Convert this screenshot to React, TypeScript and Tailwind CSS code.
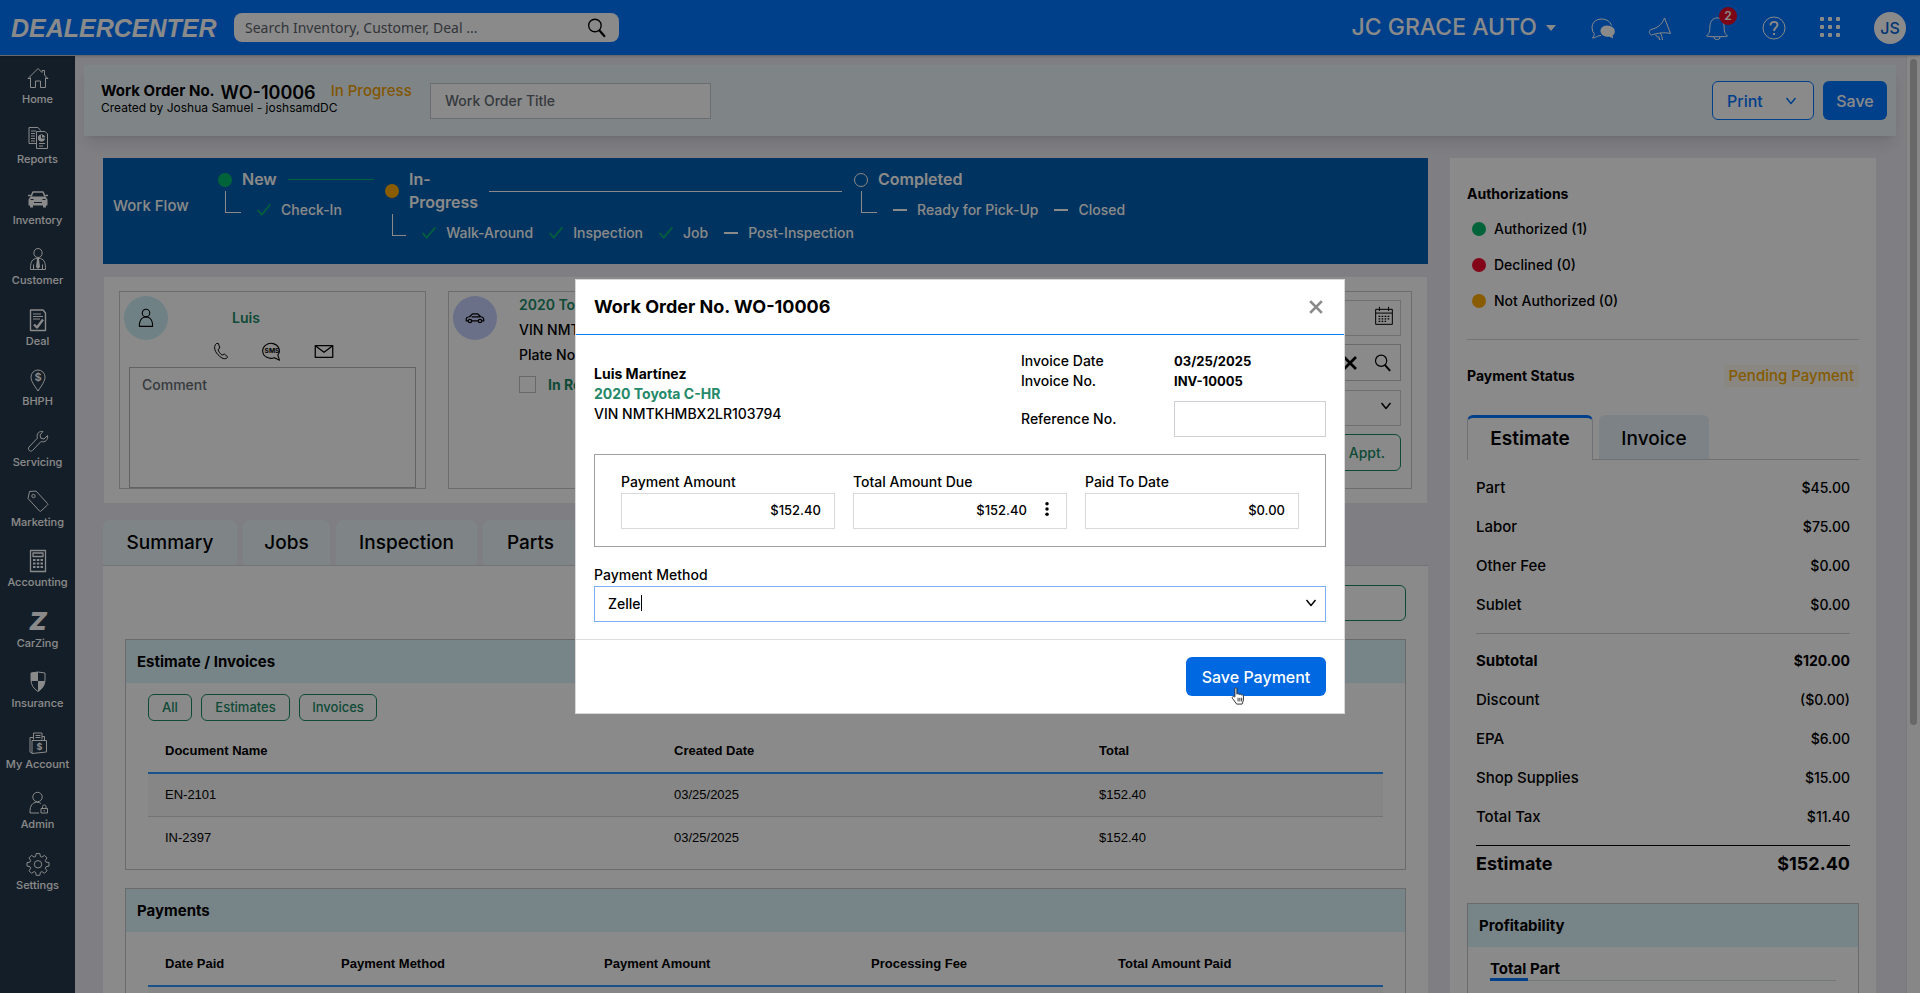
import { ReactNode, SVGProps } from "react";
import clsx from "clsx";

type IconProps = SVGProps<SVGSVGElement>;

function Icon({ children, className = "size-6", ...rest }: IconProps) {
  return (
    <svg
      viewBox="0 0 24 24"
      fill="none"
      stroke="currentColor"
      strokeWidth={1}
      strokeLinejoin="round"
      className={clsx("shrink-0", className)}
      aria-hidden="true"
      {...rest}
    >
      {children}
    </svg>
  );
}

const ChevronIcon = ({ className = "size-3" }: { className?: string }) => (
  <Icon className={className} strokeWidth={2.9}>
    <path d="M3 6l9 11 9-11" />
  </Icon>
);

const SearchIcon = ({ className = "size-5" }: { className?: string }) => (
  <Icon className={className} strokeWidth={1.6}>
    <circle cx="9.5" cy="9" r="7.500" />
    <path d="M14.500 14.500l7 8" strokeWidth={2.600} />
  </Icon>
);

const CheckIcon = () => (
  <Icon className="size-[14px] text-[#00b86b]" strokeWidth={2.800}>
    <path d="M1 12l7 8L23 2" />
  </Icon>
);

const sidebarItems: { label: string; icon: ReactNode }[] = [
  {
    label: "Home",
    icon: (
      <path d="M4.500 11.500v10h5v-6.500h5v6.500h5v-10M2 12.500L12 2.500l4 4v-2h2.500v4.500L22 12.500h-2.500M2 12.500h2.500" />
    ),
  },
  {
    label: "Reports",
    icon: (
      <>
        <path d="M10.500 17.500h-7.500V1.500h9l2.500 3v1M10.500 22.500v-17h8.500l2.500 2.500v14.500z" />
        <path d="M5 5h5M5 7.500h4M5 10h4M5 12.500h4M5 15h4M13 17.500h6M13 20h4" />
        <circle cx="15.500" cy="12" r="3.200" fill="currentColor" />
        <path d="M15.500 12V9M15.500 12h3.500" stroke="#25384a" />
      </>
    ),
  },
  {
    label: "Inventory",
    icon: (
      <>
        <path d="M5 9.500l2-4.500h10l2 4.500M2 8.500h2.500M19.500 8.500H22" strokeWidth={1.600} />
        <path
          d="M4.500 9.500h15l2 3v6h-1.500v2h-3v-2H7v2H4v-2H2.500v-6z"
          fill="currentColor"
          stroke="none"
        />
        <path d="M4.500 12.500h3M16.500 12.500h3M8 15.500h8" stroke="#25384a" />
      </>
    ),
  },
  {
    label: "Customer",
    icon: (
      <>
        <path d="M12 1.500c5.500 0 5.500 9 0 9s-5.500-9 0-9zM4.500 22.500c0-6 .5-9.500 5-11h5c4.500 1.500 5 5 5 11z" />
        <path d="M11 12h2l1 8-2 2-2-2z" fill="currentColor" stroke="none" />
        <path d="M7.500 17.500v5M16.500 17.500v5" />
      </>
    ),
  },
  {
    label: "Deal",
    icon: (
      <>
        <path d="M4.500 2h12.500l2.500 3v17.500h-15z" strokeWidth={1.400} />
        <path d="M7 6h8M7 8.500h10M7 11h7" />
        <path d="M8 16.500l3 3 6-8" strokeWidth={2.400} />
      </>
    ),
  },
  {
    label: "BHPH",
    icon: (
      <>
        <path d="M12 23C8 17 5 13 5 9a7 7 0 0 1 14 0c0 4-3 8-7 14z" />
        <text
          x="12"
          y="13"
          fontSize="11"
          fontWeight="600"
          textAnchor="middle"
          fill="currentColor"
          stroke="none"
        >
          $
        </text>
      </>
    ),
  },
  {
    label: "Servicing",
    icon: (
      <path d="M17 2.500c-4-.8-7 2.500-5.500 6.500L3 18c-2 2.500 1.500 5.500 3.500 3.500L15 12.500c4 1.500 7.500-2 6.500-6L18 10l-3.200-.8L14 6z" />
    ),
  },
  {
    label: "Marketing",
    icon: (
      <>
        <path d="M3.500 2.500L10 2l11.500 12.500c.5.600.5 1 0 1.500l-6.500 6c-.5.500-1 .5-1.500 0L2 9.500z" />
        <circle cx="7.500" cy="7" r="1.700" />
      </>
    ),
  },
  {
    label: "Accounting",
    icon: (
      <>
        <path d="M4.500 1.500h15v21h-15zM7 4h10v3.500H7z" strokeWidth={1.300} />
        <path
          d="M7 11h2.500M10.800 11h2.500M14.500 11H17M7 14.500h2.500M10.800 14.500h2.500M14.500 14.500H17M7 18h2.500M10.800 18h2.500M14.500 18H17"
          strokeWidth={2}
        />
      </>
    ),
  },
  {
    label: "CarZing",
    icon: (
      <text
        x="12"
        y="20"
        fontSize="25"
        fontWeight="900"
        fontStyle="italic"
        textAnchor="middle"
        fill="currentColor"
        stroke="none"
      >
        Z
      </text>
    ),
  },
  {
    label: "Insurance",
    icon: (
      <>
        <path d="M5 3q7-2 14 0v7q0 7-7 11.500Q5 17 5 10z" />
        <path
          d="M5 3q3-1 7-1v9H5zM12 11h7q-.5 6-7 10.500z"
          fill="currentColor"
          stroke="none"
        />
      </>
    ),
  },
  {
    label: "My Account",
    icon: (
      <>
        <path d="M7.500 8.500V2h8.500v6.500M9.500 4.500h5M9.500 6.500h5M6 22l-2-1V6.500h3.500M6 9.500h14.500V21L6 22.500z" />
        <path d="M16 5.500h2.500v4" />
        <text
          x="13.500"
          y="19"
          fontSize="9"
          fontWeight="700"
          textAnchor="middle"
          fill="currentColor"
          stroke="none"
        >
          $
        </text>
      </>
    ),
  },
  {
    label: "Admin",
    icon: (
      <>
        <circle cx="11.500" cy="6" r="4.700" />
        <path d="M13 22H4c0-6 1-9 5-10.500 2-.5 4-.5 6 1" />
        <path d="M15 17.500h6.500v4.500H15zM16.500 17.500v-2c0-2 3.500-2 3.500 0v2M18.200 19v1.500" />
      </>
    ),
  },
  {
    label: "Settings",
    icon: (
      <>
        <path d="M10.200 1.500h3.600l.6 3 1.500.6 2.600-1.700 2.500 2.500-1.700 2.600.7 1.600 3 .5v3.500l-3 .6-.7 1.500 1.700 2.600-2.500 2.500-2.600-1.700-1.500.7-.6 3h-3.600l-.6-3-1.500-.7-2.600 1.700L3 18.800l1.700-2.600-.7-1.500-3-.6v-3.500l3-.5.700-1.600L3 5.900l2.500-2.500 2.600 1.700 1.500-.6z" />
        <circle cx="12" cy="12.300" r="3.700" />
      </>
    ),
  },
];

function TopBar() {
  return (
    <header className="z-10 flex h-14 shrink-0 items-center border-b border-[#c4c4cc] bg-[#0075ff] pr-[14px] pl-[11px] text-white shadow">
      <span className="w-[223px] font-['Liberation_Sans',sans-serif] text-[25px] leading-8 font-bold italic">
        DEALERCENTER
      </span>
      <div className="flex h-[29px] w-[385px] items-center rounded-lg bg-white pr-3 pl-[11px] text-black">
        <input
          type="search"
          aria-label="Search"
          placeholder="Search Inventory, Customer, Deal ..."
          className="min-w-0 flex-1 font-['Noto_Sans','Open_Sans',sans-serif] text-sm outline-none placeholder:text-[#5c636b]"
        />
        <SearchIcon />
      </div>
      <div className="ml-auto flex items-center">
        <button className="mr-[35px] flex items-center gap-[9px] text-[23px] font-medium">
          JC GRACE AUTO
          <span className="border-x-[5px] border-t-[6px] border-x-transparent border-t-white" />
        </button>
        <div className="flex items-center gap-[33px]">
          <button aria-label="Messages">
            <Icon>
              <path d="M10 19.500C6 19.500 5 22 1.500 22c1.500-1.500 2-3 1.500-4.500C-1 12 1 3.500 10 3c6 0 9.500 3 10.500 6.500" />
              <path
                d="M15.500 9.500c9.500 0 10 8 6 10l.8 3-3.800-1.800C7 21.500 7 10 15.500 9.500z"
                fill="currentColor"
                stroke="none"
              />
            </Icon>
          </button>
          <button aria-label="Announcements">
            <Icon>
              <path d="M16.500 2C14 9 9 12 3 13.500c-2.500 1.500-2 4.500.5 5.500C10 17 16 16 22.500 17.500zM8 18.500c0 2 1 2.500 3 2.500l.5 3 3 .5c0-3-1-6-2.500-7.500" />
            </Icon>
          </button>
          <button aria-label="Notifications" className="relative">
            <Icon>
              <path d="M1.500 20c4-3.500 3-6.500 3.500-10.500C5.500 5 8 2 12 2s6.500 3 7 7.500c.5 4-.5 7 3.500 10.500 0 1-21 1-21 0zM9 20.500c0 4.500 6 4.500 6 0" />
            </Icon>
            <span className="absolute -top-[9px] left-[14px] flex size-[18px] items-center justify-center rounded-full bg-[#e50c28] text-xs font-semibold">
              2
            </span>
          </button>
          <button aria-label="Help">
            <Icon>
              <circle cx="12" cy="12" r="11" />
              <path
                d="M8.500 9.500c0-5 7-4.500 7-.5 0 2.500-3.500 2.500-3.500 6M12 17v2"
                strokeWidth={1.900}
              />
            </Icon>
          </button>
          <button aria-label="Apps">
            <Icon fill="currentColor" stroke="none">
              {[1, 9, 17].map((y) =>
                [1, 9, 17].map((x) => (
                  <rect key={`${x}-${y}`} x={x} y={y} width="4" height="4" rx="1" />
                )),
              )}
            </Icon>
          </button>
          <button className="-ml-[2px] flex size-8 items-center justify-center rounded-full bg-white text-base font-medium text-[#0063d8]">
            JS
          </button>
        </div>
      </div>
    </header>
  );
}

function Sidebar() {
  return (
    <nav className="w-[75px] shrink-0 bg-[#25384a] pt-[6px] text-white">
      <ul className="grid h-[846px]">
        {sidebarItems.map(({ label, icon }) => (
          <li key={label}>
            <a href="#" className="flex flex-col items-center pt-1">
              <Icon>{icon}</Icon>
              <span className="pt-px text-[11px] leading-4 font-medium whitespace-nowrap">
                {label}
              </span>
            </a>
          </li>
        ))}
      </ul>
    </nav>
  );
}

function OrderHeader() {
  return (
    <div className="mt-[9px] mr-[10px] ml-[9px] flex h-[71px] items-center bg-[#ebf6fa] pr-[9px] pl-[17px] shadow-lg">
      <div className="w-[329px] pb-[10px]">
        <div className="flex items-center whitespace-nowrap">
          <h1 className="text-[15px] leading-5 font-bold">Work Order No.</h1>
          <span className="ml-[6px] pt-1 text-lg leading-5 font-semibold">WO-10006</span>
          <span className="ml-[15px] text-[15px] leading-5 font-medium text-[#f0a000]">
            In Progress
          </span>
        </div>
        <p className="text-xs leading-[10px]">Created by Joshua Samuel - joshsamdDC</p>
      </div>
      <input
        aria-label="Work Order Title"
        placeholder="Work Order Title"
        className="h-9 w-[281px] border border-[#c6c9cf] bg-white px-[14px] text-sm font-medium placeholder:text-[#646b74]"
      />
      <div className="ml-auto flex gap-[9px] text-base font-medium">
        <button className="flex h-[39px] w-[102px] items-center justify-between rounded-md border border-[#0075ff] bg-white pr-4 pl-[14px] text-[#0075ff]">
          Print
          <ChevronIcon />
        </button>
        <button className="h-[39px] w-16 rounded-md bg-[#0075ff] text-white">Save</button>
      </div>
    </div>
  );
}

type StepProps = {
  title: string;
  dot: string;
  line?: string;
  titleWidth?: string;
  className?: string;
  tasks: { label: string; done: boolean }[];
};

function Step({ title, dot, line, titleWidth, className, tasks }: StepProps) {
  return (
    <li className={className}>
      <div className="flex items-center">
        <span className={clsx("size-[14px] shrink-0 rounded-full", dot)} />
        <span className={clsx("ml-[10px] text-base leading-[23px] font-semibold", titleWidth)}>
          {title}
        </span>
        {line && <span className={clsx("h-px flex-1", line)} />}
      </div>
      <div className="flex pl-[7px]">
        <span className="h-[22px] w-4 border-b border-l border-white" />
        <ul className="flex gap-4 pt-2 pl-4">
          {tasks.map(({ label, done }) => (
            <li
              key={label}
              className="flex items-center gap-[10px] text-sm leading-[22px] font-medium whitespace-nowrap"
            >
              {done ? <CheckIcon /> : <span className="h-[2px] w-[14px] bg-white" />}
              {label}
            </li>
          ))}
        </ul>
      </div>
    </li>
  );
}

function WorkFlow() {
  return (
    <section className="flex h-[106px] bg-[#005eb0] text-white">
      <h2 className="w-[115px] pt-9 pl-[10px] text-[15px] leading-6 font-medium">Work Flow</h2>
      <ol className="flex pt-[10px]">
        <Step
          title="New"
          dot="bg-[#00b86b]"
          line="mr-[11px] bg-[#00b86b]"
          titleWidth="w-[46px]"
          className="w-[167px]"
          tasks={[{ label: "Check-In", done: true }]}
        />
        <Step
          title="In- Progress"
          dot="bg-[#ffaa00]"
          line="mr-3 bg-white"
          titleWidth="w-20"
          className="w-[469px]"
          tasks={[
            { label: "Walk-Around", done: true },
            { label: "Inspection", done: true },
            { label: "Job", done: true },
            { label: "Post-Inspection", done: false },
          ]}
        />
        <Step
          title="Completed"
          dot="border border-white"
          tasks={[
            { label: "Ready for Pick-Up", done: false },
            { label: "Closed", done: false },
          ]}
        />
      </ol>
    </section>
  );
}

function OrderInfo() {
  return (
    <section className="mx-px mt-[13px] grid h-[226px] grid-cols-[307px_1fr_1fr] gap-[22px] bg-white px-[15px] py-[14px]">
      <div className="flex flex-col border border-[#c9c9c9]">
        <div className="flex items-center pt-1 pl-1">
          <span className="flex size-11 items-center justify-center rounded-full bg-[#cdeef5]">
            <Icon className="size-5" strokeWidth={1.300}>
              <circle cx="12" cy="6" r="4.500" />
              <path d="M4 22c0-7 2-10 5.500-11h5c3.500 1 5.500 4 5.500 11z" />
            </Icon>
          </span>
          <a href="#" className="ml-16 text-sm font-semibold text-[#1a8a66]">
            Luis
          </a>
        </div>
        <div className="flex items-center justify-center gap-8 pt-px">
          <button aria-label="Call">
            <Icon className="size-[18px]">
              <path
                d="M6 2c-5 4-2 12 4 17 5 4 8 4.500 11 1l-4.500-4-3 1.500c-3-2-4.500-4.500-5.500-7.500l2.500-2L8.500 2z"
                strokeWidth={1.300}
              />
            </Icon>
          </button>
          <button aria-label="Send SMS">
            <Icon className="size-5">
              <path d="M15 20a10 9 0 1 1 4-3l2 6z" strokeWidth={1.300} />
              <text
                x="12"
                y="14"
                fontSize="8"
                fontWeight="700"
                textAnchor="middle"
                fill="currentColor"
                stroke="none"
              >
                SMS
              </text>
            </Icon>
          </button>
          <button aria-label="Send email">
            <Icon className="size-5" strokeWidth={1.500}>
              <path d="M1.500 5.500h21v14h-21zM2 6l10 7.500L22 6" />
            </Icon>
          </button>
        </div>
        <textarea
          aria-label="Comment"
          placeholder="Comment"
          className="mx-[9px] mt-[6px] min-h-0 flex-1 resize-none border border-[#b5b5b5] px-3 py-[7px] text-sm font-medium placeholder:text-[#646b74]"
        />
      </div>

      <div className="flex border border-[#c9c9c9] pl-1">
        <span className="mt-1 flex size-11 shrink-0 items-center justify-center rounded-full bg-[#c5cffb]">
          <Icon className="size-5" strokeWidth={1.500}>
            <path d="M4 15.500H1.500c-.5-4 1-4.500 4-5L9 7h6l4 3.500c3 .5 4 1.500 3.500 5H20M8 15.500h8M8 10.500h10" />
            <circle cx="6" cy="15.500" r="2" />
            <circle cx="18" cy="15.500" r="2" />
          </Icon>
        </span>
        <div className="pl-[22px] text-sm leading-[25px] font-medium">
          <a href="#" className="block font-semibold text-[#1a8a66]">
            2020 Toyota C-HR
          </a>
          <p>VIN NMTKHMBX2LR103794</p>
          <p>Plate No.</p>
          <label className="mt-[5px] flex items-center gap-3 font-bold text-[#1a8a66]">
            <input
              type="checkbox"
              className="size-[17px] appearance-none border border-[#c3c3c3]"
            />
            In Recon
          </label>
        </div>
      </div>

      <div className="flex flex-col border border-[#c9c9c9] px-[10px] pt-2">
        <div className="flex h-9 items-start border border-[#cfcfcf] pt-[5px] pr-[6px]">
          <input aria-label="Due Date" className="h-6 min-w-0 flex-1" />
          <Icon className="size-5" strokeWidth={1.200}>
            <path d="M2 4h20v18H2zM2 8.500h20M6.500 1v5M17.500 1v5" />
            <path
              d="M5.500 12.500h13M5.500 15.500h13M5.500 18.500h9"
              strokeWidth={1.600}
              strokeDasharray="2 1.600"
            />
          </Icon>
        </div>
        <div className="mt-2 flex h-[37px] items-center gap-[15px] border border-[#c0c4cc] pr-2">
          <input aria-label="Advisor" className="h-full min-w-0 flex-1" />
          <Icon className="size-[18px]" strokeWidth={3.600}>
            <path d="M4 4l16 16M20 4L4 20" />
          </Icon>
          <SearchIcon className="size-[18px]" />
        </div>
        <div className="mt-[9px] flex h-9 items-center border border-[#cfcfcf] pr-2 pb-1">
          <select aria-label="Bay" className="h-full min-w-0 flex-1 appearance-none" />
          <ChevronIcon />
        </div>
        <button className="mt-2 h-[37px] rounded-md border border-[#1a8a66] pr-[15px] text-right text-sm font-medium text-[#1a8a66]">
          Schedule Appt.
        </button>
      </div>
    </section>
  );
}

type Column = { label: string; width: string };

const documentColumns: Column[] = [
  { label: "Document Name", width: "w-[509px]" },
  { label: "Created Date", width: "w-[425px]" },
  { label: "Total", width: "" },
];

const paymentColumns: Column[] = [
  { label: "Date Paid", width: "w-[176px]" },
  { label: "Payment Method", width: "w-[263px]" },
  { label: "Payment Amount", width: "w-[267px]" },
  { label: "Processing Fee", width: "w-[247px]" },
  { label: "Total Amount Paid", width: "" },
];

function DataTable({ columns, rows }: { columns: Column[]; rows: string[][] }) {
  return (
    <table className="w-full table-fixed text-left font-['Liberation_Sans',sans-serif] text-[13px]">
      <thead>
        <tr className="h-11 border-b-2 border-[#2f96ff]">
          {columns.map(({ label, width }) => (
            <th key={label} className={clsx("pl-[17px] font-bold", width)}>
              {label}
            </th>
          ))}
        </tr>
      </thead>
      <tbody>
        {rows.map((row, i) => (
          <tr
            key={i}
            className="h-[43px] border-b border-[#d6d6dc] last:border-0 odd:bg-[#f8f8f8]"
          >
            {row.map((cell, j) => (
              <td key={j} className="pl-[17px]">
                {cell}
              </td>
            ))}
          </tr>
        ))}
      </tbody>
    </table>
  );
}

function Panel({
  title,
  className,
  children,
}: {
  title: string;
  className?: string;
  children: ReactNode;
}) {
  return (
    <section className={clsx("border border-[#c4c4c4]", className)}>
      <h2 className="bg-[#def6fc] pl-[11px] text-[15px] leading-[43px] font-bold">{title}</h2>
      {children}
    </section>
  );
}

function Documents() {
  const tabs = [
    { label: "Summary", width: "w-[134px]" },
    { label: "Jobs", width: "w-[87px]" },
    { label: "Inspection", width: "w-[141px]" },
    { label: "Parts", width: "w-[95px]" },
  ];
  const filters = [
    { label: "All", width: "w-11" },
    { label: "Estimates", width: "w-[89px]" },
    { label: "Invoices", width: "w-[78px]" },
  ];

  return (
    <>
      <div className="mt-[17px] flex gap-[6px]">
        {tabs.map(({ label, width }) => (
          <button
            key={label}
            className={clsx(
              "h-[45px] rounded-t-lg bg-[#ebf6fa] pt-[2px] text-[19px] font-medium",
              width,
            )}
          >
            {label}
          </button>
        ))}
      </div>
      <div className="border-t border-[#d5d6de] bg-white px-[22px] pt-[19px]">
        <button
          aria-label="New document"
          className="ml-auto block h-9 w-[200px] rounded-md border border-[#1a8a66]"
        />
        <Panel title="Estimate / Invoices" className="mt-[18px] h-[231px]">
          <div className="px-[22px] pt-[11px]">
            <div className="mb-2 flex gap-[9px]">
              {filters.map(({ label, width }) => (
                <button
                  key={label}
                  className={clsx(
                    "h-[27px] rounded-md border border-[#1a8a66] text-[13px] font-medium text-[#1a8a66]",
                    width,
                  )}
                >
                  {label}
                </button>
              ))}
            </div>
            <DataTable
              columns={documentColumns}
              rows={[
                ["EN-2101", "03/25/2025", "$152.40"],
                ["IN-2397", "03/25/2025", "$152.40"],
              ]}
            />
          </div>
        </Panel>
        <Panel title="Payments" className="mt-[18px] h-[231px]">
          <div className="px-[22px] pt-[10px]">
            <DataTable
              columns={paymentColumns}
              rows={[["03/25/2025", "Zelle", "$152.40", "$0.00", "$152.40"]]}
            />
          </div>
        </Panel>
      </div>
    </>
  );
}

const charges = [
  ["Part", "$45.00"],
  ["Labor", "$75.00"],
  ["Other Fee", "$0.00"],
  ["Sublet", "$0.00"],
];

const totals = [
  ["Subtotal", "$120.00"],
  ["Discount", "($0.00)"],
  ["EPA", "$6.00"],
  ["Shop Supplies", "$15.00"],
  ["Total Tax", "$11.40"],
];

function AmountRow({ label, value, bold }: { label: string; value: string; bold?: boolean }) {
  return (
    <div
      className={clsx(
        "flex justify-between text-sm leading-[39px]",
        bold ? "font-bold" : "font-medium",
      )}
    >
      <dt className="text-[15px] leading-[39px]">{label}</dt>
      <dd>{value}</dd>
    </div>
  );
}

function SummaryColumn() {
  const authorizations = [
    { label: "Authorized (1)", color: "bg-[#00b86b]" },
    { label: "Declined (0)", color: "bg-[#f00c2c]" },
    { label: "Not Authorized (0)", color: "bg-[#ffaa00]" },
  ];

  return (
    <aside className="bg-white px-[17px] pt-[26px] text-sm font-medium">
      <h2 className="leading-5 font-bold">Authorizations</h2>
      <ul className="pt-[7px] pl-[5px]">
        {authorizations.map(({ label, color }) => (
          <li key={label} className="flex h-9 items-center gap-2">
            <span className={clsx("size-[14px] rounded-full", color)} />
            {label}
          </li>
        ))}
      </ul>
      <div className="mt-5 flex items-center justify-between border-t border-[#d5d5d5] pt-[25px]">
        <h2 className="leading-[22px] font-bold">Payment Status</h2>
        <span className="rounded bg-[#fffaf0] px-[5px] text-[15px] leading-[22px] text-[#f5a800]">
          Pending Payment
        </span>
      </div>
      <div className="mt-7 flex gap-[6px] border-b border-[#d0d0d0] text-[19px]">
        <button className="-mb-px h-[45px] w-[126px] rounded-t-md border-x border-t-[3px] border-x-[#d0d0d8] border-t-[#0075ff] bg-white font-semibold">
          Estimate
        </button>
        <button className="h-11 w-[110px] rounded-t-md bg-[#e6f1f8] pt-[3px] font-medium">
          Invoice
        </button>
      </div>
      <dl className="px-[9px] pt-2">
        {charges.map(([label, value]) => (
          <AmountRow key={label} label={label} value={value} />
        ))}
        <div className="mt-[9px] border-t border-[#d0d0d0] pt-[7px]">
          {totals.map(([label, value]) => (
            <AmountRow key={label} label={label} value={value} bold={label === "Subtotal"} />
          ))}
        </div>
        <div className="mt-[9px] flex justify-between border-t border-black text-lg leading-[35px] font-bold">
          <dt>Estimate</dt>
          <dd>$152.40</dd>
        </div>
      </dl>
      <Panel title="Profitability" className="mt-[22px]">
        <div className="px-[22px] pt-[11px]">
          <h3 className="border-b border-[#d5dfe0] text-[15px] leading-[22px] font-bold">
            Total Part
          </h3>
          <div className="-mt-[3px] h-[3px] w-[38px] bg-[#0075ff]" />
          <div className="h-24" />
        </div>
      </Panel>
    </aside>
  );
}

type AmountFieldProps = {
  id: string;
  label: string;
  value: string;
  menu?: boolean;
};

function AmountField({ id, label, value, menu }: AmountFieldProps) {
  return (
    <div>
      <label htmlFor={id} className="block leading-[22px]">
        {label}
      </label>
      <div className="flex h-9 items-center border border-[#d9d9dd]">
        <input
          id={id}
          defaultValue={value}
          className={clsx(
            "h-full min-w-0 flex-1 pb-[2px] text-right text-[13px] outline-none",
            !menu && "pr-[13px]",
          )}
        />
        {menu && (
          <button aria-label="Amount options" className="flex w-[39px] justify-center pb-1">
            <svg viewBox="0 0 4 16" className="h-[14px] w-1" aria-hidden="true">
              <circle cx="2" cy="2" r="2" />
              <circle cx="2" cy="8" r="2" />
              <circle cx="2" cy="14" r="2" />
            </svg>
          </button>
        )}
      </div>
    </div>
  );
}

function PaymentDialog() {
  return (
    <div className="fixed inset-0 z-20 flex items-center justify-center bg-black/46">
      <div
        role="dialog"
        aria-labelledby="dialog-title"
        className="w-[770px] border border-[#d8d8d8] bg-white text-sm font-medium"
      >
        <div className="flex h-[55px] items-center justify-between border-b border-[#0a7cf5] pr-[21px] pl-[18px]">
          <h2 id="dialog-title" className="text-lg font-bold">
            Work Order No. WO-10006
          </h2>
          <button aria-label="Close" className="text-[#8a8a8a]">
            <Icon className="size-[14px]" strokeWidth={4.600}>
              <path d="M2 2l20 20M22 2L2 22" />
            </Icon>
          </button>
        </div>

        <div className="px-[18px]">
          <div className="flex justify-between pt-4">
            <div className="pt-[13px] leading-5">
              <p className="font-bold">Luis Martínez</p>
              <p className="font-bold text-[#26896a]">2020 Toyota C-HR</p>
              <p>VIN NMTKHMBX2LR103794</p>
            </div>
            <div className="grid grid-cols-[153px_152px] items-center leading-5">
              <span>Invoice Date</span>
              <span className="text-[13px] font-bold">03/25/2025</span>
              <span>Invoice No.</span>
              <span className="text-[13px] font-bold">INV-10005</span>
              <label htmlFor="reference" className="pt-[10px]">
                Reference No.
              </label>
              <input
                id="reference"
                className="mt-[10px] h-9 w-full border border-[#cfcfd6] px-3"
              />
            </div>
          </div>

          <div className="mt-[17px] grid grid-cols-3 gap-[18px] border border-[#a0a0a0] px-[26px] pt-4 pb-[17px]">
            <AmountField id="payment-amount" label="Payment Amount" value="$152.40" />
            <AmountField id="amount-due" label="Total Amount Due" value="$152.40" menu />
            <AmountField id="paid-to-date" label="Paid To Date" value="$0.00" />
          </div>

          <label htmlFor="payment-method" className="mt-[17px] block leading-[22px]">
            Payment Method
          </label>
          <div className="relative flex h-9 items-center border border-[#7eb0f7] pr-2 pb-[2px]">
            <input
              id="payment-method"
              defaultValue="Zelle"
              className="h-full min-w-0 flex-1 pl-[13px] outline-none"
            />
            <span className="absolute top-2 left-[46px] h-4 w-px bg-black" />
            <ChevronIcon />
          </div>
        </div>

        <div className="mt-[17px] flex justify-end border-t border-[#dedede] px-[18px] py-[17px]">
          <button className="relative h-[39px] w-[140px] rounded-md bg-[#0068e0] text-base font-medium whitespace-nowrap text-white">
            Save Payment
            <svg
              viewBox="0 0 16 20"
              className="absolute top-[30px] left-[45px] h-[18px] w-[15px]"
              fill="#fff"
              stroke="#222"
              strokeLinejoin="round"
              aria-hidden="true"
            >
              <path d="M4 11V2c0-1.500 2.200-1.500 2.200 0v6c.5-1 2.200-.8 2.500.4.600-1 2.300-.7 2.500.6.700-.8 2.300-.4 2.300.9v4.600l-1.500 4.500H6L1.200 12.500c-.8-1.500 1-2.500 2-1.500z" />
              <path d="M7.500 12v4M9.500 12v4M11.500 12v4" />
            </svg>
          </button>
        </div>
      </div>
    </div>
  );
}

export default function App() {
  return (
    <div className="flex h-screen flex-col overflow-hidden bg-[#ebebf2] font-['Inter',sans-serif] text-black">
      <TopBar />
      <div className="flex min-h-0 flex-1">
        <Sidebar />
        <main className="min-w-0 flex-1 overflow-hidden">
          <OrderHeader />
          <div className="grid grid-cols-[minmax(0,1fr)_426px] gap-[22px] pt-[22px] pr-[30px] pl-7">
            <div>
              <WorkFlow />
              <OrderInfo />
              <Documents />
            </div>
            <SummaryColumn />
          </div>
        </main>
        <div className="w-[14px] shrink-0 border-l border-[#e0e0e0] bg-[#fafafa] px-[3px] pt-[3px]">
          <div className="h-[666px] rounded-full bg-[#c1c1c1]" />
        </div>
      </div>
      <PaymentDialog />
    </div>
  );
}
